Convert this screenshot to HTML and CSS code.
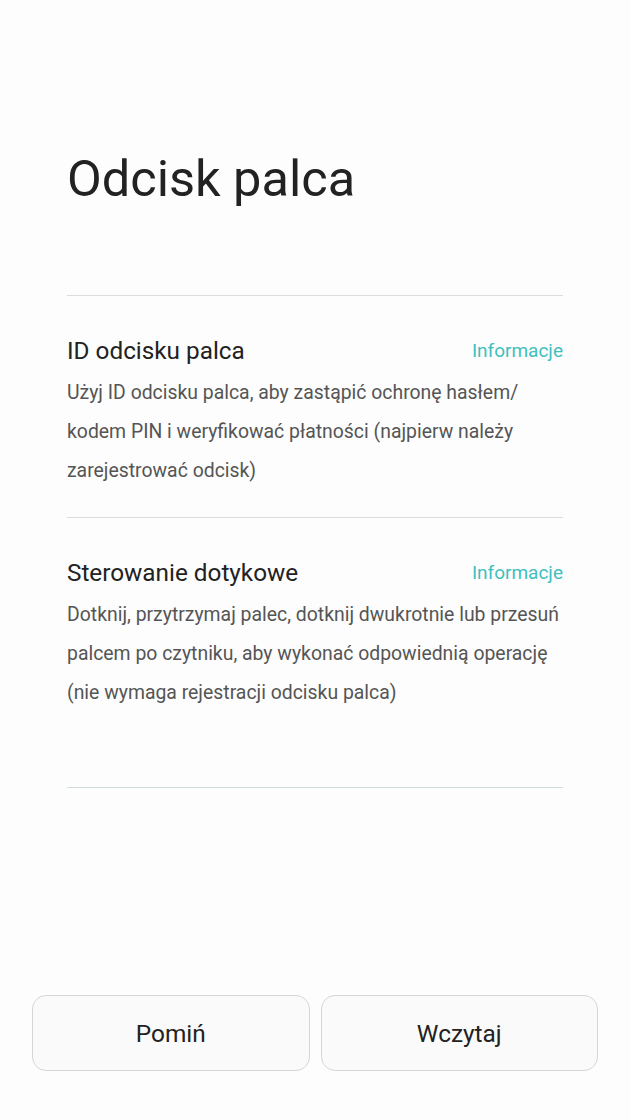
FILE: index.html
```html
<!DOCTYPE html>
<html lang="pl">
<head>
    <meta charset="UTF-8">
    <meta name="viewport" content="width=device-width, initial-scale=1.0">
    <title>Odcisk palca</title>
    <link rel="stylesheet" href="styles.css">
</head>
<body>
    <div class="page">
        <div class="content">
            <h1 class="title">Odcisk palca</h1>

            <div class="section">
                <div class="section-head">
                    <span class="section-title">ID odcisku palca</span>
                    <a href="#" class="info-link">Informacje</a>
                </div>
                <p class="section-desc">Użyj ID odcisku palca, aby zastąpić ochronę hasłem/ kodem PIN i weryfikować płatności (najpierw należy zarejestrować odcisk)</p>
            </div>

            <div class="section section-last">
                <div class="section-head">
                    <span class="section-title">Sterowanie dotykowe</span>
                    <a href="#" class="info-link">Informacje</a>
                </div>
                <p class="section-desc">Dotknij, przytrzymaj palec, dotknij dwukrotnie lub przesuń palcem po czytniku, aby wykonać odpowiednią operację (nie wymaga rejestracji odcisku palca)</p>
            </div>
        </div>

        <div class="actions">
            <button class="btn">Pomiń</button>
            <button class="btn">Wczytaj</button>
        </div>
    </div>
</body>
</html>
```

FILE: styles.css
```css
body {
    margin: 0;
    padding: 0;
    background-color: #fdfdfd;
    font-family: Roboto, "Noto Sans", Arial, sans-serif;
    color: #222;
}
.page {
    height: 1120px;
    display: flex;
    flex-direction: column;
    box-sizing: border-box;
    padding: 0 32px 49px;
}
.content {
    padding: 0 35px;
}
.title {
    margin: 0;
    padding-top: 147px;
    padding-bottom: 84px;
    font-size: 50.5px;
    font-weight: 400;
    line-height: 64px;
    color: #222;
    border-bottom: 1px solid #dcdcdc;
}
.section {
    padding: 39px 0 27px;
    border-bottom: 1px solid #dcdcdc;
}
.section-last {
    padding-bottom: 75px;
    border-bottom-color: #d2dcdc;
}
.section-head {
    display: flex;
    justify-content: space-between;
    align-items: center;
    height: 30px;
    margin-bottom: 8px;
}
.section-title {
    font-size: 24.3px;
    color: #222;
}
.info-link {
    font-size: 19px;
    color: #3fbfc0;
    text-decoration: none;
}
.section-desc {
    margin: 0;
    font-size: 19.4px;
    line-height: 39px;
    color: #555;
}
.actions {
    margin-top: auto;
    display: flex;
    gap: 11px;
}
.btn {
    flex: 1;
    height: 76px;
    background-color: #fafafa;
    border: 1px solid #d6d6d6;
    border-radius: 14px;
    font-family: Roboto, "Noto Sans", Arial, sans-serif;
    font-size: 24.4px;
    color: #222;
    cursor: pointer;
}
```
